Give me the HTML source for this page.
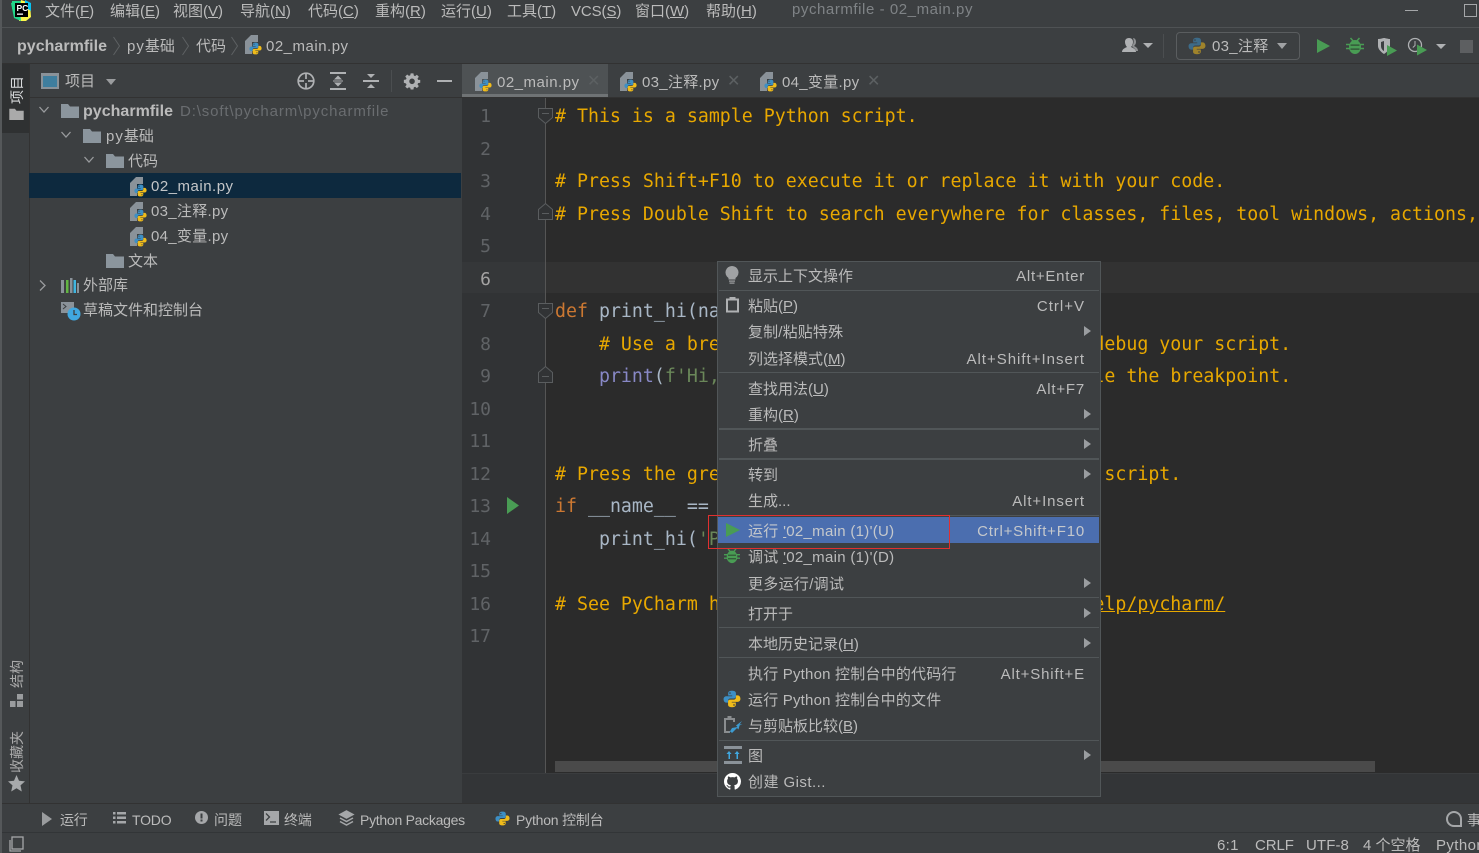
<!DOCTYPE html>
<html lang="zh"><head><meta charset="utf-8"><title>pycharmfile - 02_main.py</title>
<style>
html,body{margin:0;padding:0;width:1479px;height:853px;overflow:hidden}
body{position:relative;background:#3c3f41;color:#bbbbbb;font:15px "Liberation Sans","Noto Sans CJK SC",sans-serif}
.a{position:absolute;white-space:pre;line-height:20px}
.b{position:absolute}
svg{position:absolute;overflow:visible}
.code{position:absolute;left:555px;width:924px;overflow:hidden;white-space:pre;font:18.25px/32px "DejaVu Sans Mono","Liberation Mono",monospace;color:#a9b7c6;height:32px;letter-spacing:0}
.c{color:#e8a800}.k{color:#cc7832}.p{color:#8888c6}.s{color:#6a8759}
.ln{position:absolute;left:462px;width:29px;text-align:right;font:18px/32px "DejaVu Sans Mono",monospace;color:#606366}
.m{position:absolute;left:748px;white-space:pre;line-height:20px;color:#bbb;font-size:15px}
.r{position:absolute;right:394px;white-space:pre;line-height:20px;color:#bbb;font-size:15px}
.sep{position:absolute;left:719px;width:380px;height:1px;background:#515658}
.ar{position:absolute;left:1084px;width:0;height:0;border-left:7px solid #9a9da0;border-top:5px solid transparent;border-bottom:5px solid transparent}
.t{position:absolute;white-space:pre;line-height:20px;font-size:14px;color:#bbb}
.v{position:absolute;writing-mode:vertical-rl;text-orientation:sideways;transform:rotate(180deg);line-height:16px;font-size:14px;white-space:pre;color:#aaa}
.x{position:absolute;color:#5c6062;font-size:16px;line-height:20px}
</style></head><body>
<svg width="0" height="0" style="position:absolute">
<defs>
<symbol id="py" viewBox="0 0 16 16"><path fill="#3d8fc4" d="M8 .7C5.300 .7 4.600 1.800 4.600 3v1.900h3.600v.6H3C1.500 5.500.5 6.600.5 8.200s1 3 2.300 3h1.700V9.500c0-1.100.9-2 2-2h3.300c1 0 1.700-.7 1.700-1.700V3C11.500 1.700 10.600.7 8 .7zM6.200 2a.7.7 0 1 1 0 1.400.7.7 0 0 1 0-1.400z"/><path fill="#f0bc1a" d="M8 15.300c2.700 0 3.400-1.100 3.400-2.300v-1.900H7.800v-.6H13c1.500 0 2.500-1.100 2.500-2.700s-1-3-2.300-3h-1.700v1.700c0 1.100-.9 2-2 2H6.200c-1 0-1.700.7-1.700 1.700V13c0 1.300.9 2.300 3.500 2.300zM9.800 14a.7.7 0 1 1 0-1.400.7.7 0 0 1 0 1.400z"/></symbol>
<symbol id="pf" viewBox="0 0 17 20"><path fill="#8a9299" d="M0 6l6-6h7v7H7v12H0z"/><use href="#py" x="4" y="7" width="13" height="13"/></symbol>
<symbol id="fo" viewBox="0 0 18 15"><path fill="#8b959d" d="M0 1h7l2 2.500h9V15H0z"/></symbol>
<symbol id="bug" viewBox="0 0 18 18"><path fill="none" stroke="#499c54" stroke-width="1.500" d="M4.500 1l3 3.500M13.500 1l-3 3.500M0 7.500h4M14 7.500h4M0 11.500h4M14 11.500h4"/><ellipse cx="9" cy="10" rx="6" ry="7" fill="#499c54"/><rect x="4.500" y="7.500" width="9" height="1.200" fill="#2f4a33"/><rect x="4.500" y="11.500" width="9" height="1.200" fill="#2f4a33"/></symbol>
</defs></svg>

<!-- left edge -->
<div class="b" style="left:0;top:0;width:2px;height:853px;background:#55585a"></div>

<!-- title bar -->
<div class="b" style="left:2px;top:27px;width:1477px;height:1px;background:#4f5254"></div>
<svg style="left:11px;top:0" width="21" height="22" viewBox="0 0 21 22"><path fill="#21d789" d="M1 1h12v8H1z"/><path fill="#fcf84a" d="M10 0l9 3 1 14-5 4H8z"/><path fill="#07c3f2" d="M14 0l6 3v8l-6-4z"/><path fill="#21d789" d="M0 3l8-2 2 20-7-3z"/><rect x="4" y="3" width="13" height="14" fill="#000"/><rect x="6" y="13.500" width="6" height="1.300" fill="#fff"/><text x="5.500" y="11" fill="#fff" font-family="Liberation Sans" font-size="8.500" font-weight="700">PC</text></svg>
<div class="a" style="left:45px;top:2px">文件(<u>F</u>)</div>
<div class="a" style="left:110px;top:2px">编辑(<u>E</u>)</div>
<div class="a" style="left:173px;top:2px">视图(<u>V</u>)</div>
<div class="a" style="left:240px;top:2px">导航(<u>N</u>)</div>
<div class="a" style="left:308px;top:2px">代码(<u>C</u>)</div>
<div class="a" style="left:375px;top:2px">重构(<u>R</u>)</div>
<div class="a" style="left:441px;top:2px">运行(<u>U</u>)</div>
<div class="a" style="left:507px;top:2px">工具(<u>T</u>)</div>
<div class="a" style="left:571px;top:2px;letter-spacing:-.1px">VCS(<u>S</u>)</div>
<div class="a" style="left:635px;top:2px">窗口(<u>W</u>)</div>
<div class="a" style="left:706px;top:2px">帮助(<u>H</u>)</div>
<div class="a" style="left:792px;top:0;color:#7f8386;letter-spacing:.56px">pycharmfile - 02_main.py</div>
<div class="b" style="left:1405px;top:10px;width:13px;height:1px;background:#a5a7a9"></div>
<div class="b" style="left:1464px;top:4px;width:11px;height:11px;border:1px solid #a5a7a9"></div>

<!-- breadcrumb -->
<div class="b" style="left:2px;top:63px;width:1477px;height:1px;background:#323232"></div>
<div class="a" style="left:17px;top:37px;font-weight:700;color:#bbb;font-size:16px;letter-spacing:.02px">pycharmfile</div>
<svg style="left:112px;top:36px" width="10" height="20" fill="none" stroke="#5e6163"><path d="M1.500 1l6 9-6 9"/></svg>
<div class="a" style="left:127px;top:37px"><span style="letter-spacing:1px">py</span>基础</div>
<svg style="left:181px;top:36px" width="10" height="20" fill="none" stroke="#5e6163"><path d="M1.500 1l6 9-6 9"/></svg>
<div class="a" style="left:196px;top:37px">代码</div>
<svg style="left:230px;top:36px" width="10" height="20" fill="none" stroke="#5e6163"><path d="M1.500 1l6 9-6 9"/></svg>
<svg style="left:245px;top:35px" width="17" height="20"><use href="#pf"/></svg>
<div class="a" style="left:266px;top:37px;letter-spacing:.5px">02_main.py</div>

<!-- toolbar right -->
<svg style="left:1122px;top:38px" width="32" height="15"><path fill="#afb1b3" d="M0 14c0-3 3-4 5-5-1-1-2-3-2-5 0-2 1-4 4-4s4 2 4 4c0 2-1 4-2 5 2 1 5 2 5 5z"/><path fill="#8f9193" d="M11 0c2 0 3 2 3 4s-1 3-2 4c2 1 4 2 4 5h-2c-1-3-3-3-4-5 2-2 2-6 1-8z"/><path fill="#afb1b3" d="M21 5h10l-5 5z"/></svg>
<div class="b" style="left:1163px;top:34px;width:1px;height:24px;background:#4b4e50"></div>
<div class="b" style="left:1176px;top:32px;width:122px;height:26px;border:1px solid #5a5d5f;border-radius:4px"></div>
<svg style="left:1188px;top:37px" width="18" height="18" opacity=".55"><use href="#py" width="18" height="18"/></svg>
<div class="a" style="left:1212px;top:37px;letter-spacing:.3px">03_注释</div>
<div class="b" style="left:1277px;top:43px;width:0;height:0;border-top:6px solid #a0a2a4;border-left:5.500px solid transparent;border-right:5.500px solid transparent"></div>
<svg style="left:1317px;top:39px" width="13" height="14"><path fill="#499c54" d="M0 0l13 7L0 14z"/></svg>
<svg style="left:1346px;top:37px" width="18" height="18"><use href="#bug" width="18" height="18"/></svg>
<svg style="left:1378px;top:38px" width="19" height="18"><path fill="#afb1b3" d="M0 1c3 0 5-1 6-1s4 1 6 1v7c0 3-3 6-6 8-3-2-6-5-6-8z"/><path fill="#3c3f41" d="M6 3v10c-2-1-3-3-3-5V4z"/><path fill="#499c54" d="M9 7l10 5.500L9 18z"/></svg>
<svg style="left:1408px;top:37px" width="20" height="18" fill="none"><circle cx="7" cy="8" r="6.500" stroke="#afb1b3" stroke-width="1.300"/><path d="M7 4v4.500L4.800 10.500" stroke="#afb1b3"/><path fill="#499c54" d="M9 7.500l10 5.500L9 18.500z"/></svg>
<div class="b" style="left:1436px;top:44px;width:0;height:0;border-top:5px solid #afb1b3;border-left:5px solid transparent;border-right:5px solid transparent"></div>
<div class="b" style="left:1460px;top:40px;width:13px;height:13px;background:#5d5f61"></div>

<!-- left strip -->
<div class="b" style="left:2px;top:64px;width:27px;height:69px;background:#2f3132"></div>
<div class="b" style="left:29px;top:64px;width:1px;height:740px;background:#323232"></div>
<div class="v" style="left:9px;top:76px;color:#d8dadc">项目</div>
<svg style="left:9px;top:108px" width="15" height="12" viewBox="0 0 18 15"><path fill="#aaa" d="M0 1h7l2 2.500h9V15H0z"/></svg>
<div class="v" style="left:9px;top:660px">结构</div>
<svg style="left:10px;top:694px" width="13" height="13"><path fill="#9a9c9e" d="M0 7h5.500v6H0zM7 7h6v6H7zM7 0h6v5.500H7z"/></svg>
<div class="v" style="left:9px;top:731px">收藏夹</div>
<svg style="left:8px;top:775px" width="17" height="17"><path fill="#a7a9ab" d="M8.500 0l2.500 5.800 6 .6-4.500 4 1.300 6.100-5.300-3.200-5.300 3.200 1.300-6.100-4.500-4 6-.6z"/></svg>

<!-- project panel -->
<div class="b" style="left:30px;top:97px;width:432px;height:1px;background:#323232"></div>
<div class="b" style="left:41px;top:73px;width:14px;height:11px;background:#3f7e9e;border:2px solid #8a9299;border-top-width:3px;box-sizing:content-box"></div>
<div class="a" style="left:65px;top:72px">项目</div>
<div class="b" style="left:106px;top:79px;width:0;height:0;border-top:6px solid #9a9c9e;border-left:5.500px solid transparent;border-right:5.500px solid transparent"></div>
<svg style="left:297px;top:72px" width="18" height="18" fill="none" stroke="#afb1b3" stroke-width="1.700"><circle cx="9" cy="9" r="7.800"/><path d="M9 2v5M9 11v5M2 9h5M11 9h5"/></svg>
<svg style="left:330px;top:72px" width="16" height="18" fill="#afb1b3"><rect width="16" height="2"/><rect y="16" width="16" height="2"/><path d="M8 3.500l4 4H4zM8 14.500l4-4H4z"/><rect x="3" y="8.500" width="10" height="1"/></svg>
<svg style="left:363px;top:72px" width="16" height="18" fill="#afb1b3"><rect y="8" width="16" height="2"/><path d="M4 2l4 4 4-4zM4 16l4-4 4 4z"/></svg>
<div class="b" style="left:391px;top:70px;width:1px;height:22px;background:#4b4e50"></div>
<svg style="left:404px;top:73px" width="16" height="16" viewBox="0 0 16 16"><path fill="#afb1b3" fill-rule="evenodd" d="M6.500 0h3l.4 2.300 1.400.6L13.200 1.500l2.100 2.100-1.400 1.900.6 1.400L16.800 7v3l-2.300.4-.6 1.400 1.400 1.900-2.100 2.100-1.900-1.400-1.400.6-.4 2.300h-3L6.100 15.500l-1.400-.6-1.900 1.400-2.100-2.100 1.400-1.900-.6-1.400L-.8 10V7l2.300-.4.6-1.400L.7 3.300l2.100-2.100 1.900 1.400 1.400-.6zM8 5.500a3 3 0 1 0 0 6 3 3 0 0 0 0-6z" transform="translate(.6 .4) scale(.93)"/></svg>
<div class="b" style="left:437px;top:80px;width:15px;height:2px;background:#afb1b3"></div>

<div class="b" style="left:29px;top:173px;width:432px;height:25px;background:#0d293e"></div>
<svg style="left:39px;top:106px" width="10" height="8" fill="none" stroke="#9a9c9e" stroke-width="1.300"><path d="M.5 1l4.500 5 4.500-5"/></svg>
<svg style="left:61px;top:103px" width="18" height="15"><use href="#fo"/></svg>
<div class="a" style="left:83px;top:102px;font-weight:700;font-size:16px;letter-spacing:.02px">pycharmfile</div>
<div class="a" style="left:180px;top:102px;color:#6a6d70;letter-spacing:.87px">D:\soft\pycharm\pycharmfile</div>
<svg style="left:61px;top:131px" width="10" height="8" fill="none" stroke="#9a9c9e" stroke-width="1.300"><path d="M.5 1l4.500 5 4.500-5"/></svg>
<svg style="left:83px;top:128px" width="18" height="15"><use href="#fo"/></svg>
<div class="a" style="left:106px;top:127px"><span style="letter-spacing:1px">py</span>基础</div>
<svg style="left:84px;top:156px" width="10" height="8" fill="none" stroke="#9a9c9e" stroke-width="1.300"><path d="M.5 1l4.500 5 4.500-5"/></svg>
<svg style="left:106px;top:153px" width="18" height="15"><use href="#fo"/></svg>
<div class="a" style="left:128px;top:152px">代码</div>
<svg style="left:130px;top:177px" width="17" height="20"><use href="#pf"/></svg>
<div class="a" style="left:151px;top:177px;letter-spacing:.5px;color:#c4c6c8">02_main.py</div>
<svg style="left:130px;top:202px" width="17" height="20"><use href="#pf"/></svg>
<div class="a" style="left:151px;top:202px;letter-spacing:.3px">03_注释.py</div>
<svg style="left:130px;top:227px" width="17" height="20"><use href="#pf"/></svg>
<div class="a" style="left:151px;top:227px;letter-spacing:.3px">04_变量.py</div>
<svg style="left:106px;top:253px" width="18" height="15"><use href="#fo"/></svg>
<div class="a" style="left:128px;top:252px">文本</div>
<svg style="left:39px;top:280px" width="8" height="11" fill="none" stroke="#9a9c9e" stroke-width="1.300"><path d="M1 .5l5 5-5 5"/></svg>
<svg style="left:61px;top:277px" width="18" height="16"><rect y="3" width="3" height="13" fill="#8a9299"/><rect x="5" y="3" width="2.500" height="13" fill="#62b543"/><rect x="9" y="1" width="2.500" height="15" fill="#8a9299"/><rect x="12.500" y="3" width="2.500" height="13" fill="#40b6e0"/><rect x="16" y="6" width="2" height="10" fill="#8a9299"/></svg>
<div class="a" style="left:83px;top:276px">外部库</div>
<svg style="left:61px;top:302px" width="20" height="20"><rect width="13" height="11" fill="#8a9299"/><path d="M2 2l3 2.500L2 7" stroke="#3c3f41" fill="none"/><circle cx="13" cy="12" r="6.500" fill="#40a8e0"/><path d="M13 8v4.500h3" stroke="#3c3f41" fill="none" stroke-width="1.300"/></svg>
<div class="a" style="left:83px;top:301px">草稿文件和控制台</div>

<!-- tabs -->
<div class="b" style="left:462px;top:64px;width:146px;height:30px;background:#4e5254"></div>
<div class="b" style="left:462px;top:94px;width:146px;height:3px;background:#6f7375"></div>
<div class="b" style="left:462px;top:97px;width:1017px;height:1px;background:#323232"></div>
<svg style="left:475px;top:72px" width="17" height="20"><use href="#pf"/></svg>
<div class="a" style="left:497px;top:73px;letter-spacing:.5px">02_main.py</div>
<div class="x" style="left:587px;top:72px">✕</div>
<svg style="left:620px;top:72px" width="17" height="20"><use href="#pf"/></svg>
<div class="a" style="left:642px;top:73px;letter-spacing:.3px">03_注释.py</div>
<div class="x" style="left:727px;top:72px">✕</div>
<svg style="left:760px;top:72px" width="17" height="20"><use href="#pf"/></svg>
<div class="a" style="left:782px;top:73px;letter-spacing:.3px">04_变量.py</div>
<div class="x" style="left:867px;top:72px">✕</div>

<!-- editor -->
<div class="b" style="left:462px;top:98px;width:84px;height:675px;background:#313335"></div>
<div class="b" style="left:546px;top:98px;width:933px;height:675px;background:#2b2b2b"></div>
<div class="b" style="left:545px;top:98px;width:1px;height:675px;background:#555"></div>
<div class="b" style="left:462px;top:262px;width:83px;height:31px;background:#353739"></div>
<div class="b" style="left:546px;top:262px;width:933px;height:31px;background:#323232"></div>
<div class="b" style="left:462px;top:773px;width:1017px;height:1px;background:#3a3c3e"></div>
<div class="b" style="left:462px;top:774px;width:1017px;height:30px;background:#333537"></div>
<div class="b" style="left:555px;top:761px;width:820px;height:11px;background:#4a4a4a"></div>

<div class="ln" style="top:101px">1</div><div class="ln" style="top:134px">2</div><div class="ln" style="top:166px">3</div><div class="ln" style="top:199px">4</div><div class="ln" style="top:231px">5</div><div class="ln" style="top:264px;color:#a4a3a3">6</div><div class="ln" style="top:296px">7</div><div class="ln" style="top:329px">8</div><div class="ln" style="top:361px">9</div><div class="ln" style="top:394px">10</div><div class="ln" style="top:426px">11</div><div class="ln" style="top:459px">12</div><div class="ln" style="top:491px">13</div><div class="ln" style="top:524px">14</div><div class="ln" style="top:556px">15</div><div class="ln" style="top:589px">16</div><div class="ln" style="top:621px">17</div>

<svg style="left:538px;top:108px" width="16" height="18" fill="#313335" stroke="#5a5d5f"><path d="M.5.500h14v9l-7 6-7-6z"/><path d="M4 5.500h7" fill="none"/></svg>
<svg style="left:538px;top:203px" width="16" height="18" fill="#313335" stroke="#5a5d5f"><path d="M.5 16.500h14v-10l-7-6-7 6z"/><path d="M4 10.500h7" fill="none"/></svg>
<svg style="left:538px;top:303px" width="16" height="18" fill="#313335" stroke="#5a5d5f"><path d="M.5.500h14v9l-7 6-7-6z"/><path d="M4 5.500h7" fill="none"/></svg>
<svg style="left:538px;top:366px" width="16" height="18" fill="#313335" stroke="#5a5d5f"><path d="M.5 16.500h14v-10l-7-6-7 6z"/><path d="M4 10.500h7" fill="none"/></svg>
<svg style="left:507px;top:497px" width="12" height="17"><path fill="#499c54" d="M0 0l12 8.500L0 17z"/></svg>

<div class="code c" style="top:101px"># This is a sample Python script.</div>
<div class="code c" style="top:166px"># Press Shift+F10 to execute it or replace it with your code.</div>
<div class="code c" style="top:199px"># Press Double Shift to search everywhere for classes, files, tool windows, actions, and settings.</div>
<div class="code" style="top:296px"><span class="k">def</span> print_hi(name):</div>
<div class="code c" style="top:329px">    # Use a breakpoint in the code line below to debug your script.</div>
<div class="code" style="top:361px">    <span class="p">print</span>(<span class="s">f'Hi, </span>{name}<span class="s">'</span>)  <span class="c"># Press Ctrl+F8 to toggle the breakpoint.</span></div>
<div class="code c" style="top:459px"># Press the green button in the gutter to run the script.</div>
<div class="code" style="top:491px"><span class="k">if</span> __name__ == <span class="s">'__main__'</span>:</div>
<div class="code" style="top:524px">    print_hi(<span class="s">'PyCharm'</span>)</div>
<div class="code c" style="top:589px"># See PyCharm help at <u>https://www.jetbrains.com/help/pycharm/</u></div>

<!-- context menu -->
<div class="b" style="left:717px;top:261px;width:382px;height:534px;background:#3c3f41;border:1px solid #515658"></div>
<div class="b" style="left:718px;top:517px;width:381px;height:26px;background:#4b6eaf"></div>
<div class="sep" style="top:290px"></div><div class="sep" style="top:372px"></div><div class="sep" style="top:428px;height:2px"></div><div class="sep" style="top:458px;height:2px"></div><div class="sep" style="top:515px"></div><div class="sep" style="top:597px"></div><div class="sep" style="top:627px"></div><div class="sep" style="top:657px"></div><div class="sep" style="top:740px"></div>

<svg style="left:725px;top:266px" width="14" height="18"><path fill="#a0a2a4" d="M7 0a6.500 6.500 0 0 1 3.500 12v1.500h-7V12A6.500 6.500 0 0 1 7 0z"/><rect x="4" y="14.500" width="6" height="1.200" fill="#a0a2a4"/><rect x="4.500" y="16.500" width="5" height="1.200" fill="#a0a2a4"/></svg>
<svg style="left:726px;top:297px" width="13" height="16" fill="none"><rect x="1" y="2.500" width="11" height="12" stroke="#afb1b3" stroke-width="2"/><rect x="3.500" y="0" width="6" height="3.500" fill="#afb1b3"/></svg>
<svg style="left:726px;top:523px" width="14" height="14"><path fill="#499c54" d="M0 0l14 7L0 14z"/></svg>
<svg style="left:724px;top:548px" width="16" height="16"><use href="#bug" width="16" height="16"/></svg>
<svg style="left:723px;top:690px" width="18" height="18"><use href="#py" width="18" height="18"/></svg>
<svg style="left:724px;top:716px" width="19" height="19"><path fill="none" stroke="#8a8d8f" stroke-width="2" d="M6 16H1V3h9v3"/><rect x="3.500" y="0" width="4" height="3.500" fill="#8a8d8f"/><path fill="#3d9bd0" d="M18 5L12 9.500l1.500 1.500L8 12 5 17l1.500-1.500 1.500 1.500 5-5 1.500 1.500 1-4 3-1.500-3 .5z"/></svg>
<svg style="left:724px;top:746px" width="18" height="18"><rect width="18" height="3" fill="#8a9299"/><rect y="15" width="18" height="3" fill="#8a9299"/><path fill="#40a8e0" d="M5 5l2.500 3H6v5H4.500V8H2.500zM13 5l2.500 3H14v5h-1.500V8h-2z"/></svg>
<svg style="left:724px;top:773px" width="17" height="17" viewBox="0 0 16 16"><path fill="#fff" d="M8 0C3.580 0 0 3.580 0 8c0 3.540 2.290 6.530 5.470 7.590.4.070.55-.17.550-.38 0-.19-.01-.82-.01-1.490-2.010.37-2.530-.49-2.690-.94-.09-.23-.48-.94-.82-1.130-.28-.15-.68-.52-.01-.53.630-.01 1.080.58 1.230.82.720 1.210 1.870.87 2.330.66.070-.52.280-.87.510-1.070-1.780-.2-3.640-.89-3.640-3.950 0-.87.310-1.590.820-2.150-.08-.2-.36-1.020.08-2.120 0 0 .67-.21 2.200.82.640-.18 1.320-.27 2-.27s1.360.09 2 .27c1.530-1.040 2.200-.82 2.200-.82.440 1.100.16 1.920.08 2.120.51.560.82 1.270.82 2.150 0 3.070-1.870 3.750-3.650 3.950.29.250.54.730.54 1.480 0 1.070-.01 1.930-.01 2.200 0 .21.150.46.550.38A8.010 8.010 0 0 0 16 8c0-4.420-3.580-8-8-8z"/></svg>

<div class="m" style="top:267px">显示上下文操作</div><div class="r" style="top:267px;letter-spacing:.75px">Alt+Enter</div>
<div class="m" style="top:297px">粘贴(<u>P</u>)</div><div class="r" style="top:297px;letter-spacing:1px">Ctrl+V</div>
<div class="m" style="top:323px;letter-spacing:.15px">复制/粘贴特殊</div><div class="ar" style="top:326px"></div>
<div class="m" style="top:350px">列选择模式(<u>M</u>)</div><div class="r" style="top:350px;letter-spacing:1px">Alt+Shift+Insert</div>
<div class="m" style="top:380px">查找用法(<u>U</u>)</div><div class="r" style="top:380px;letter-spacing:.8px">Alt+F7</div>
<div class="m" style="top:406px">重构(<u>R</u>)</div><div class="ar" style="top:409px"></div>
<div class="m" style="top:436px">折叠</div><div class="ar" style="top:439px"></div>
<div class="m" style="top:466px">转到</div><div class="ar" style="top:469px"></div>
<div class="m" style="top:492px">生成...</div><div class="r" style="top:492px;letter-spacing:.9px">Alt+Insert</div>
<div class="m" style="top:522px;letter-spacing:.3px;color:#c5c8cc">运行 <u>'</u>02_main (1)'(U)</div><div class="r" style="top:522px;letter-spacing:.8px;color:#c5c8cc">Ctrl+Shift+F10</div>
<div class="m" style="top:548px;letter-spacing:.3px">调试 <u>'</u>02_main (1)'(D)</div>
<div class="m" style="top:575px;letter-spacing:.3px">更多运行/调试</div><div class="ar" style="top:578px"></div>
<div class="m" style="top:605px">打开于</div><div class="ar" style="top:608px"></div>
<div class="m" style="top:635px">本地历史记录(<u>H</u>)</div><div class="ar" style="top:638px"></div>
<div class="m" style="top:665px;letter-spacing:.2px">执行 Python 控制台中的代码行</div><div class="r" style="top:665px;letter-spacing:.85px">Alt+Shift+E</div>
<div class="m" style="top:691px;letter-spacing:.2px">运行 Python 控制台中的文件</div>
<div class="m" style="top:717px">与剪贴板比较(<u>B</u>)</div>
<div class="m" style="top:747px">图</div><div class="ar" style="top:750px"></div>
<div class="m" style="top:773px;letter-spacing:.45px">创建 Gist...</div>

<div class="b" style="left:708px;top:515px;width:240px;height:32px;border:1px solid #e03030"></div>

<!-- bottom tool bar -->
<div class="b" style="left:2px;top:803px;width:1477px;height:1px;background:#323232"></div>
<div class="b" style="left:2px;top:832px;width:1477px;height:1px;background:#323537"></div>
<svg style="left:42px;top:812px" width="10" height="14"><path fill="#9a9c9e" d="M0 0l10 7-10 7z"/></svg>
<div class="t" style="left:60px;top:810px;letter-spacing:-.2px">运行</div>
<svg style="left:113px;top:812px" width="13" height="12" fill="#a5a7a9"><path d="M0 0h2.500v2.500H0zM4 0h9v2.500H4zM0 4.500h2.500V7H0zM4 4.500h9V7H4zM0 9h2.500v2.500H0zM4 9h9v2.500H4z"/></svg>
<div class="t" style="left:132px;top:810px;letter-spacing:-.2px">TODO</div>
<svg style="left:195px;top:811px" width="13" height="13"><circle cx="6.500" cy="6.500" r="6.500" fill="#a5a7a9"/><rect x="5.500" y="2.500" width="2" height="5" fill="#3c3f41"/><rect x="5.500" y="8.500" width="2" height="2" fill="#3c3f41"/></svg>
<div class="t" style="left:214px;top:810px">问题</div>
<svg style="left:264px;top:811px" width="15" height="14"><rect width="15" height="14" fill="#a5a7a9"/><path d="M2 2.500l3.500 3.500L2 9.500M6 11h6" stroke="#3c3f41" fill="none" stroke-width="1.300"/></svg>
<div class="t" style="left:284px;top:810px;letter-spacing:-.2px">终端</div>
<svg style="left:338px;top:810px" width="17" height="17" fill="none" stroke="#a5a7a9" stroke-width="1.500"><path d="M8.500 1l6.500 3.500-6.500 3.500L2 4.500z" fill="#a5a7a9"/><path d="M2 8l6.500 3.500L15 8M2 11.500L8.500 15l6.500-3.500"/></svg>
<div class="t" style="left:360px;top:810px;letter-spacing:-.27px">Python Packages</div>
<svg style="left:495px;top:811px" width="15" height="15" style="filter:grayscale(1) brightness(1.100)"><use href="#py" width="15" height="15"/></svg>
<div class="t" style="left:516px;top:810px;letter-spacing:-.2px">Python 控制台</div>
<svg style="left:1446px;top:811px" width="17" height="17" fill="none" stroke="#a5a7a9" stroke-width="2"><path d="M8 1a7 7 0 1 0 0 14h7V8a7 7 0 0 0-7-7z"/></svg>
<div class="t" style="left:1467px;top:810px;width:12px;overflow:hidden">事</div>

<!-- status bar -->
<svg style="left:9px;top:836px" width="16" height="17" fill="none" stroke="#a5a7a9" stroke-width="1.300"><rect x="3" y="1" width="11" height="12"/><path d="M1 4v11h11"/></svg>
<div class="a" style="left:1217px;top:836px;letter-spacing:.3px">6:1</div>
<div class="a" style="left:1255px;top:836px;letter-spacing:-.1px">CRLF</div>
<div class="a" style="left:1306px;top:836px;letter-spacing:.1px">UTF-8</div>
<div class="a" style="left:1363px;top:836px">4 个空格</div>
<div class="a" style="left:1436px;top:836px;letter-spacing:.4px;width:43px;overflow:hidden">Python</div>
</body></html>
